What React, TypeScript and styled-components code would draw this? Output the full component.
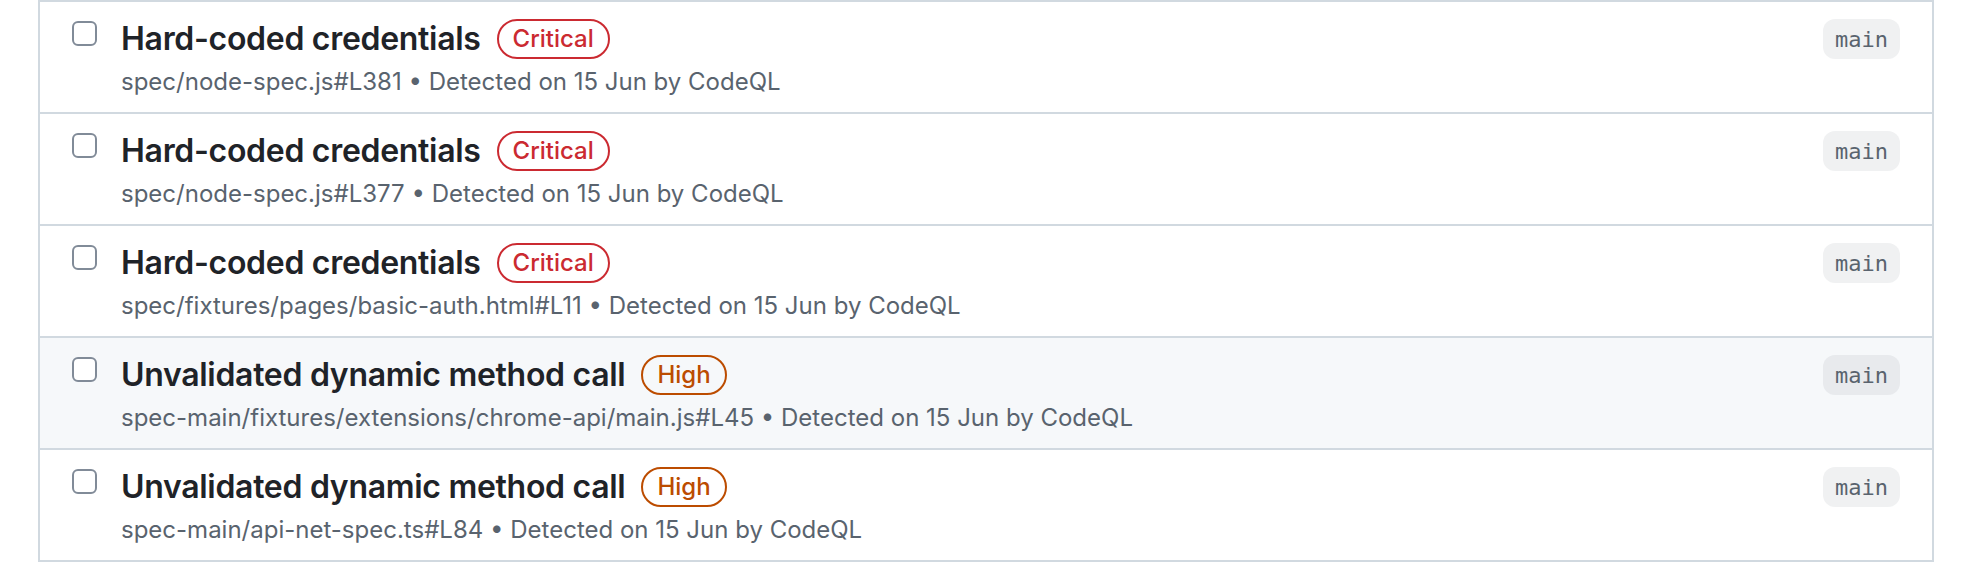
import React, { ReactElement } from 'react';
import styled, { createGlobalStyle } from 'styled-components';

interface AlertItem {
  id: number;
  title: string;
  severity: 'Critical' | 'High';
  path: string;
  detected: string;
  branch: string;
}

const alerts: AlertItem[] = [
  {
    id: 1,
    title: 'Hard-coded credentials',
    severity: 'Critical',
    path: 'spec/node-spec.js#L381',
    detected: 'Detected on 15 Jun by CodeQL',
    branch: 'main',
  },
  {
    id: 2,
    title: 'Hard-coded credentials',
    severity: 'Critical',
    path: 'spec/node-spec.js#L377',
    detected: 'Detected on 15 Jun by CodeQL',
    branch: 'main',
  },
  {
    id: 3,
    title: 'Hard-coded credentials',
    severity: 'Critical',
    path: 'spec/fixtures/pages/basic-auth.html#L11',
    detected: 'Detected on 15 Jun by CodeQL',
    branch: 'main',
  },
  {
    id: 4,
    title: 'Unvalidated dynamic method call',
    severity: 'High',
    path: 'spec-main/fixtures/extensions/chrome-api/main.js#L45',
    detected: 'Detected on 15 Jun by CodeQL',
    branch: 'main',
  },
  {
    id: 5,
    title: 'Unvalidated dynamic method call',
    severity: 'High',
    path: 'spec-main/api-net-spec.ts#L84',
    detected: 'Detected on 15 Jun by CodeQL',
    branch: 'main',
  },
];

const SEVERITY_COLOR = {
  Critical: '#cb2a31',
  High: '#bc4c00',
};

const GlobalStyle = createGlobalStyle`
  html, body {
    margin: 0;
    padding: 0;
    background: #ffffff;
  }
  body {
    font-family: Inter, "Noto Sans", "Liberation Sans", sans-serif;
    -webkit-font-smoothing: antialiased;
  }
`;

const List = styled.ul`
  list-style: none;
  margin: 0 36px 0 38px;
  padding: 0;
  border: 2px solid #d1d9e0;
  border-bottom: none;
`;

const Row = styled.li<{ hovered?: boolean }>`
  display: grid;
  grid-template-columns: 25px 1fr auto;
  column-gap: 24px;
  align-items: start;
  height: 112px;
  box-sizing: border-box;
  padding: 17px 32px 0 32px;
  background: ${(props) => (props.hovered ? '#f6f8fa' : '#ffffff')};
  border-bottom: 2px solid #d1d9e0;
`;

const Check = styled.input.attrs({ type: 'checkbox' })`
  appearance: none;
  width: 25px;
  height: 25px;
  margin: 2px 0 0 0;
  box-sizing: border-box;
  border: 2px solid #818b98;
  border-radius: 6px;
  background: #ffffff;
`;

const Body = styled.div`
  display: flex;
  flex-direction: column;
  gap: 5px;
  min-width: 0;
`;

const TitleLine = styled.div`
  display: flex;
  align-items: center;
  gap: 16px;
  height: 40px;
`;

const Title = styled.span`
  font-size: 32px;
  font-weight: 600;
  line-height: 40px;
  color: #1f2328;
  letter-spacing: -0.3px;
`;

const Severity = styled.span<{ tone: string }>`
  display: inline-flex;
  align-items: center;
  height: 40px;
  box-sizing: border-box;
  padding: 0 14px;
  border: 2px solid ${(props) => props.tone};
  border-radius: 999px;
  color: ${(props) => props.tone};
  font-size: 24px;
  font-weight: 500;
  line-height: 36px;
`;

const Meta = styled.div`
  font-size: 24px;
  line-height: 36px;
  color: #59636e;
  white-space: nowrap;
`;

const Branch = styled.span`
  display: inline-flex;
  align-items: center;
  height: 40px;
  padding: 0 12px;
  border-radius: 12px;
  background: rgba(129, 139, 152, 0.12);
  color: #59636e;
  font-family: "DejaVu Sans Mono", "Liberation Mono", monospace;
  font-size: 22px;
`;

function App(): ReactElement {
  return (
    <>
      <GlobalStyle />
      <List>
        {alerts.map((item) => (
          <Row key={item.id} hovered={item.id === 4}>
            <Check aria-label={`Select ${item.title}`} />
            <Body>
              <TitleLine>
                <Title>{item.title}</Title>
                <Severity tone={SEVERITY_COLOR[item.severity]}>{item.severity}</Severity>
              </TitleLine>
              <Meta>
                {item.path} • {item.detected}
              </Meta>
            </Body>
            <Branch>{item.branch}</Branch>
          </Row>
        ))}
      </List>
    </>
  );
}

export default App;
